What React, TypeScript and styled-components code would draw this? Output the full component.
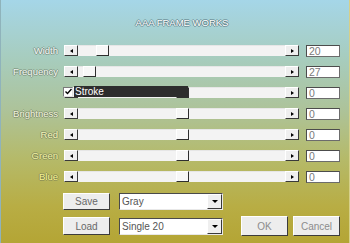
import React from "react";
import styled, { createGlobalStyle } from "styled-components";

const GlobalStyle = createGlobalStyle`
  html, body {
    margin: 0;
    padding: 0;
    background: #b4a535;
  }
  body {
    font-family: "Liberation Sans", Arial, sans-serif;
  }
`;

const outline = (c: string) =>
  `1px 0 0 ${c}, -1px 0 0 ${c}, 0 1px 0 ${c}, 0 -1px 0 ${c}`;

const Window = styled.div`
  width: 350px;
  height: 243px;
  box-sizing: border-box;
  display: flex;
  flex-direction: column;
  padding-top: 17px;
  background: linear-gradient(
    180deg,
    #a5d6e8 0%,
    #a7ccbc 25%,
    #adc39a 45%,
    #b5ba6a 65%,
    #b8ad44 85%,
    #b4a535 100%
  );
  border-left: 1px solid #8fb3bb;
  border-right: 1px solid #d6d08a;
  overflow: hidden;
`;

const Title = styled.div`
  height: 12px;
  padding-left: 14px;
  text-align: center;
  font-size: 9.5px;
  line-height: 12px;
  color: #ffffff;
  text-shadow: ${outline("rgba(70, 95, 105, 0.55)")};
`;

const Rows = styled.div`
  display: flex;
  flex-direction: column;
  gap: 10px;
  margin-top: 15px;
`;

const Row = styled.div`
  display: grid;
  grid-template-columns: 56px 235px 34px;
  column-gap: 7px;
  align-items: center;
  height: 11px;
`;

const Label = styled.div<{ $tone: string }>`
  justify-self: end;
  margin-right: -1px;
  font-size: 9.5px;
  line-height: 11px;
  color: ${(p) => p.$tone};
  text-shadow: ${outline("rgba(90, 100, 80, 0.45)")};
  white-space: nowrap;
`;

const Bar = styled.div`
  position: relative;
  display: flex;
  height: 11px;
`;

const ArrowButton = styled.div`
  width: 14px;
  height: 11px;
  box-sizing: border-box;
  background: #efefef;
  border-top: 1px solid #ffffff;
  border-left: 1px solid #ffffff;
  border-right: 1px solid #3a3a3a;
  border-bottom: 1px solid #3a3a3a;
  display: flex;
  align-items: center;
  justify-content: center;
  flex: 0 0 auto;
`;

const Tri = styled.span<{ $dir: "left" | "right" }>`
  width: 0;
  height: 0;
  border-top: 2px solid transparent;
  border-bottom: 2px solid transparent;
  ${(p) =>
    p.$dir === "left"
      ? "border-right: 3px solid #000;"
      : "border-left: 3px solid #000;"}
`;

const Track = styled.div`
  flex: 1;
  display: flex;
  background: #f3f3f3;
  border-top: 1px solid #e6e6e6;
  box-sizing: border-box;
`;

const Thumb = styled.div<{ $pos: number }>`
  margin-left: ${(p) => p.$pos}px;
  width: 13px;
  height: 11px;
  box-sizing: border-box;
  background: #f7f7f7;
  border-top: 1px solid #ffffff;
  border-left: 1px solid #ffffff;
  border-right: 1px solid #2f2f2f;
  border-bottom: 1px solid #2f2f2f;
  margin-top: -1px;
`;

const ValueBox = styled.div`
  height: 12px;
  box-sizing: border-box;
  background: #ffffff;
  border: 1px solid #6c6c6c;
  border-top-color: #4c4c4c;
  border-left-color: #4c4c4c;
  padding-left: 2px;
  font-size: 10.5px;
  line-height: 10px;
  color: #7a7a7a;
  margin-top: 1px;
`;

const StrokeOverlay = styled.div`
  position: absolute;
  left: -1px;
  top: -1px;
  height: 11px;
  display: flex;
  align-items: center;
`;

const CheckBox = styled.div`
  width: 10px;
  height: 10px;
  box-sizing: border-box;
  background: #ffffff;
  border-top: 1px solid #7a7a7a;
  border-left: 1px solid #7a7a7a;
  border-right: 1px solid #e0e0e0;
  border-bottom: 1px solid #e0e0e0;
  display: flex;
  align-items: center;
  justify-content: center;
`;

const StrokeLabel = styled.div`
  width: 114px;
  height: 11px;
  margin-left: 1px;
  background: #2d2d2d;
  color: #ffffff;
  font-size: 10px;
  line-height: 11px;
  padding-left: 1px;
  box-sizing: border-box;
`;

const Footer = styled.div`
  display: flex;
  flex-direction: column;
  gap: 7px;
  margin-top: 11px;
  padding-left: 62px;
`;

const FooterRow = styled.div`
  display: flex;
  align-items: center;
  height: 18px;
`;

const Button = styled.div<{ $h?: number; $faint?: boolean }>`
  width: 47px;
  height: ${(p) => p.$h ?? 17}px;
  box-sizing: border-box;
  background: #ededed;
  border-top: 1px solid #ffffff;
  border-left: 1px solid #ffffff;
  border-right: 1px solid #3c3c3c;
  border-bottom: 1px solid #3c3c3c;
  display: flex;
  align-items: center;
  justify-content: center;
  font-size: 10px;
  color: ${(p) => (p.$faint ? "#8c8c8c" : "#686868")};
  flex: 0 0 auto;
`;

const Select = styled.div`
  width: 104px;
  height: 17px;
  margin-left: 9px;
  box-sizing: border-box;
  background: #ffffff;
  border-top: 1px solid #4a4a4a;
  border-left: 1px solid #4a4a4a;
  border-right: 1px solid #e8e8e8;
  border-bottom: 1px solid #e8e8e8;
  display: flex;
  align-items: center;
  font-size: 10px;
  color: #555555;
  padding-left: 2px;
`;

const SelectText = styled.span`
  flex: 1;
`;

const SelectButton = styled.div`
  width: 15px;
  height: 15px;
  box-sizing: border-box;
  background: #efefef;
  border-top: 1px solid #ffffff;
  border-left: 1px solid #ffffff;
  border-right: 1px solid #3a3a3a;
  border-bottom: 1px solid #3a3a3a;
  display: flex;
  align-items: center;
  justify-content: center;
`;

const DownTri = styled.span`
  width: 0;
  height: 0;
  border-left: 3px solid transparent;
  border-right: 3px solid transparent;
  border-top: 3px solid #000;
`;

const DialogButtons = styled.div`
  display: flex;
  gap: 5px;
  margin-left: 18px;
`;

type SliderProps = { pos: number; children?: React.ReactNode };

const Slider: React.FC<SliderProps> = ({ pos, children }) => (
  <Bar>
    <ArrowButton>
      <Tri $dir="left" />
    </ArrowButton>
    <Track>
      <Thumb $pos={pos} />
    </Track>
    <ArrowButton>
      <Tri $dir="right" />
    </ArrowButton>
    {children}
  </Bar>
);

const rows = [
  { label: "Width", tone: "#f4f8f8", pos: 18, value: "20" },
  { label: "Frequency", tone: "#f0f6f2", pos: 5, value: "27" },
  { label: "", tone: "", pos: 98, value: "0", stroke: true },
  { label: "Brightness", tone: "#f2f4dc", pos: 98, value: "0" },
  { label: "Red", tone: "#f6f6b8", pos: 98, value: "0" },
  { label: "Green", tone: "#f2f2a0", pos: 98, value: "0" },
  { label: "Blue", tone: "#f8f48e", pos: 98, value: "0" },
];

export default function App() {
  return (
    <>
      <GlobalStyle />
      <Window>
        <Title>AAA FRAME WORKS</Title>
        <Rows>
          {rows.map((r, i) => (
            <Row key={i}>
              <Label $tone={r.tone}>{r.label}</Label>
              <Slider pos={r.pos}>
                {r.stroke ? (
                  <StrokeOverlay>
                    <CheckBox>
                      <svg width="7" height="7" viewBox="0 0 7 7">
                        <path
                          d="M0.5 3.5 L2.5 5.5 L6.5 1"
                          stroke="#000"
                          strokeWidth="1.4"
                          fill="none"
                        />
                      </svg>
                    </CheckBox>
                    <StrokeLabel>Stroke</StrokeLabel>
                  </StrokeOverlay>
                ) : null}
              </Slider>
              <ValueBox>{r.value}</ValueBox>
            </Row>
          ))}
        </Rows>
        <Footer>
          <FooterRow>
            <Button>Save</Button>
            <Select>
              <SelectText>Gray</SelectText>
              <SelectButton>
                <DownTri />
              </SelectButton>
            </Select>
          </FooterRow>
          <FooterRow>
            <Button $h={18}>Load</Button>
            <Select>
              <SelectText>Single 20</SelectText>
              <SelectButton>
                <DownTri />
              </SelectButton>
            </Select>
            <DialogButtons>
              <Button $h={20} $faint>
                OK
              </Button>
              <Button $h={20} $faint>
                Cancel
              </Button>
            </DialogButtons>
          </FooterRow>
        </Footer>
      </Window>
    </>
  );
}
